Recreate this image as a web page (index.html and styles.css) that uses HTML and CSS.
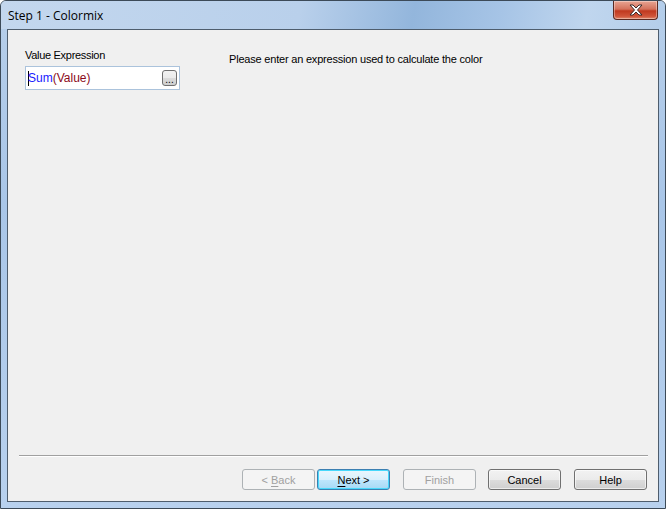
FILE: index.html
```html
<!DOCTYPE html>
<html>
<head>
    <title>Step 1 - Colormix</title>
    <link rel="stylesheet" href="styles.css">
</head>
<body>
    <div class="window">
        <div class="titlebar">
            <span class="title">Step 1 - Colormix</span>
            <button class="close-btn" title="Close">
                <svg viewBox="0 0 16 12" width="16" height="12">
                    <path d="M2,1 L5,1 L8,4 L11,1 L14,1 L9.5,6 L14,11 L11,11 L8,8 L5,11 L2,11 L6.5,6 Z"
                          fill="#ffffff" stroke="#3b2a2a" stroke-width="1" stroke-linejoin="round" />
                </svg>
            </button>
        </div>

        <div class="frame">
            <div class="client">
                <div class="page">
                    <div class="field-group">
                        <label class="field-label">Value Expression</label>
                        <div class="expr-box">
                            <span class="caret"></span><span class="fn">Sum</span><span class="arg">(Value)</span>
                            <button class="dots-btn">...</button>
                        </div>
                    </div>
                    <p class="hint">Please enter an expression used to calculate the color</p>
                </div>

                <div class="separator"></div>

                <div class="buttons">
                    <button class="btn" disabled>&lt; <u>B</u>ack</button>
                    <button class="btn default"><u>N</u>ext &gt;</button>
                    <button class="btn gap" disabled>Finish</button>
                    <button class="btn gap-sm">Cancel</button>
                    <button class="btn gap">Help</button>
                </div>
            </div>
        </div>
    </div>
</body>
</html>
```

FILE: styles.css
```css
body {
    margin: 0;
    font-family: "Liberation Sans", Arial, sans-serif;
    font-size: 11px;
    color: #000;
}

.window {
    width: 666px;
    height: 509px;
    box-sizing: border-box;
    border: 1px solid #3c4a58;
    border-radius: 6px 6px 0 0;
    background: linear-gradient(180deg, #b7cfea 0%, #a9c6e8 40%, #b8d1ee 100%);
    display: flex;
    flex-direction: column;
    overflow: hidden;
}

.titlebar {
    height: 28px;
    flex: none;
    display: flex;
    align-items: flex-start;
    justify-content: space-between;
    background: linear-gradient(100deg, #c3d7ee 0%, #b9d0eb 45%, #93b6dc 62%, #a6c4e6 75%, #c0d6ee 88%, #b3cdea 100%);
}

.title {
    font-family: "Open Sans", "Noto Sans", sans-serif;
    font-size: 12px;
    padding: 6px 0 0 7px;
    color: #000;
}

.close-btn {
    width: 45px;
    height: 19px;
    margin-right: 7px;
    padding: 0;
    border: 1px solid #5a2a22;
    border-top: none;
    border-radius: 0 0 4px 4px;
    background: linear-gradient(180deg, #e8a593 0%, #d4725c 45%, #c0391f 55%, #d0553a 85%, #e08a6e 100%);
    display: flex;
    align-items: center;
    justify-content: center;
    box-shadow: inset 0 0 0 1px rgba(255,255,255,0.35);
}

.frame {
    flex: 1;
    padding: 0 6px 6px 6px;
    display: flex;
}

.client {
    flex: 1;
    border: 1px solid #4e5d6d;
    background: #f0f0f0;
    display: flex;
    flex-direction: column;
}

.page {
    flex: 1;
    display: flex;
    padding: 19px 0 0 17px;
}

.field-group {
    display: flex;
    flex-direction: column;
    width: 155px;
}

.field-label {
    line-height: 13px;
    height: 17px;
    letter-spacing: -0.3px;
}

.expr-box {
    height: 22px;
    border: 1px solid #abc3dc;
    background: #fff;
    display: flex;
    align-items: center;
    padding-left: 2px;
    font-size: 12px;
    position: relative;
}

.caret {
    width: 1px;
    height: 15px;
    background: #000;
    margin-right: -1px;
}

.fn {
    color: #1a1aff;
}

.arg {
    color: #8b0a1a;
}

.dots-btn {
    position: absolute;
    right: 2px;
    top: 3px;
    width: 15px;
    height: 16px;
    padding: 0;
    border: 1px solid #707070;
    border-radius: 3px;
    background: linear-gradient(180deg, #f2f2f2 0%, #ebebeb 50%, #dcdcdc 51%, #cfcfcf 100%);
    font-family: "Liberation Sans", Arial, sans-serif;
    font-size: 10px;
    line-height: 18px;
    color: #000;
}

.hint {
    margin: 4px 0 0 49px;
    letter-spacing: -0.2px;
}

.separator {
    margin: 0 10px 0 11px;
    border-top: 1px solid #a0a0a0;
    border-bottom: 1px solid #ffffff;
}

.buttons {
    display: flex;
    justify-content: flex-end;
    padding: 12px 11px 11px 0;
}

.btn {
    width: 73px;
    height: 21px;
    padding: 0;
    margin-left: 2px;
    font-family: "Liberation Sans", Arial, sans-serif;
    font-size: 11px;
    color: #000;
    border: 1px solid #707070;
    border-radius: 3px;
    background: linear-gradient(180deg, #f2f2f2 0%, #ebebeb 50%, #dddddd 51%, #cfcfcf 100%);
    box-shadow: inset 0 0 0 1px rgba(255,255,255,0.6);
}

.btn.gap {
    margin-left: 13px;
}

.btn.gap-sm {
    margin-left: 12px;
}

.btn:disabled {
    color: #a0a0a0;
    border-color: #adb2b5;
    background: #f4f4f4;
    box-shadow: none;
}

.btn.default {
    border-color: #3c7fb1;
    background: linear-gradient(180deg, #eaf6fd 0%, #d9f0fc 50%, #bee6fd 51%, #a7d9f5 100%);
    box-shadow: inset 0 0 0 1px #48d8fb;
}

.btn u {
    text-decoration-thickness: 1px;
    text-underline-offset: 2px;
}
```
